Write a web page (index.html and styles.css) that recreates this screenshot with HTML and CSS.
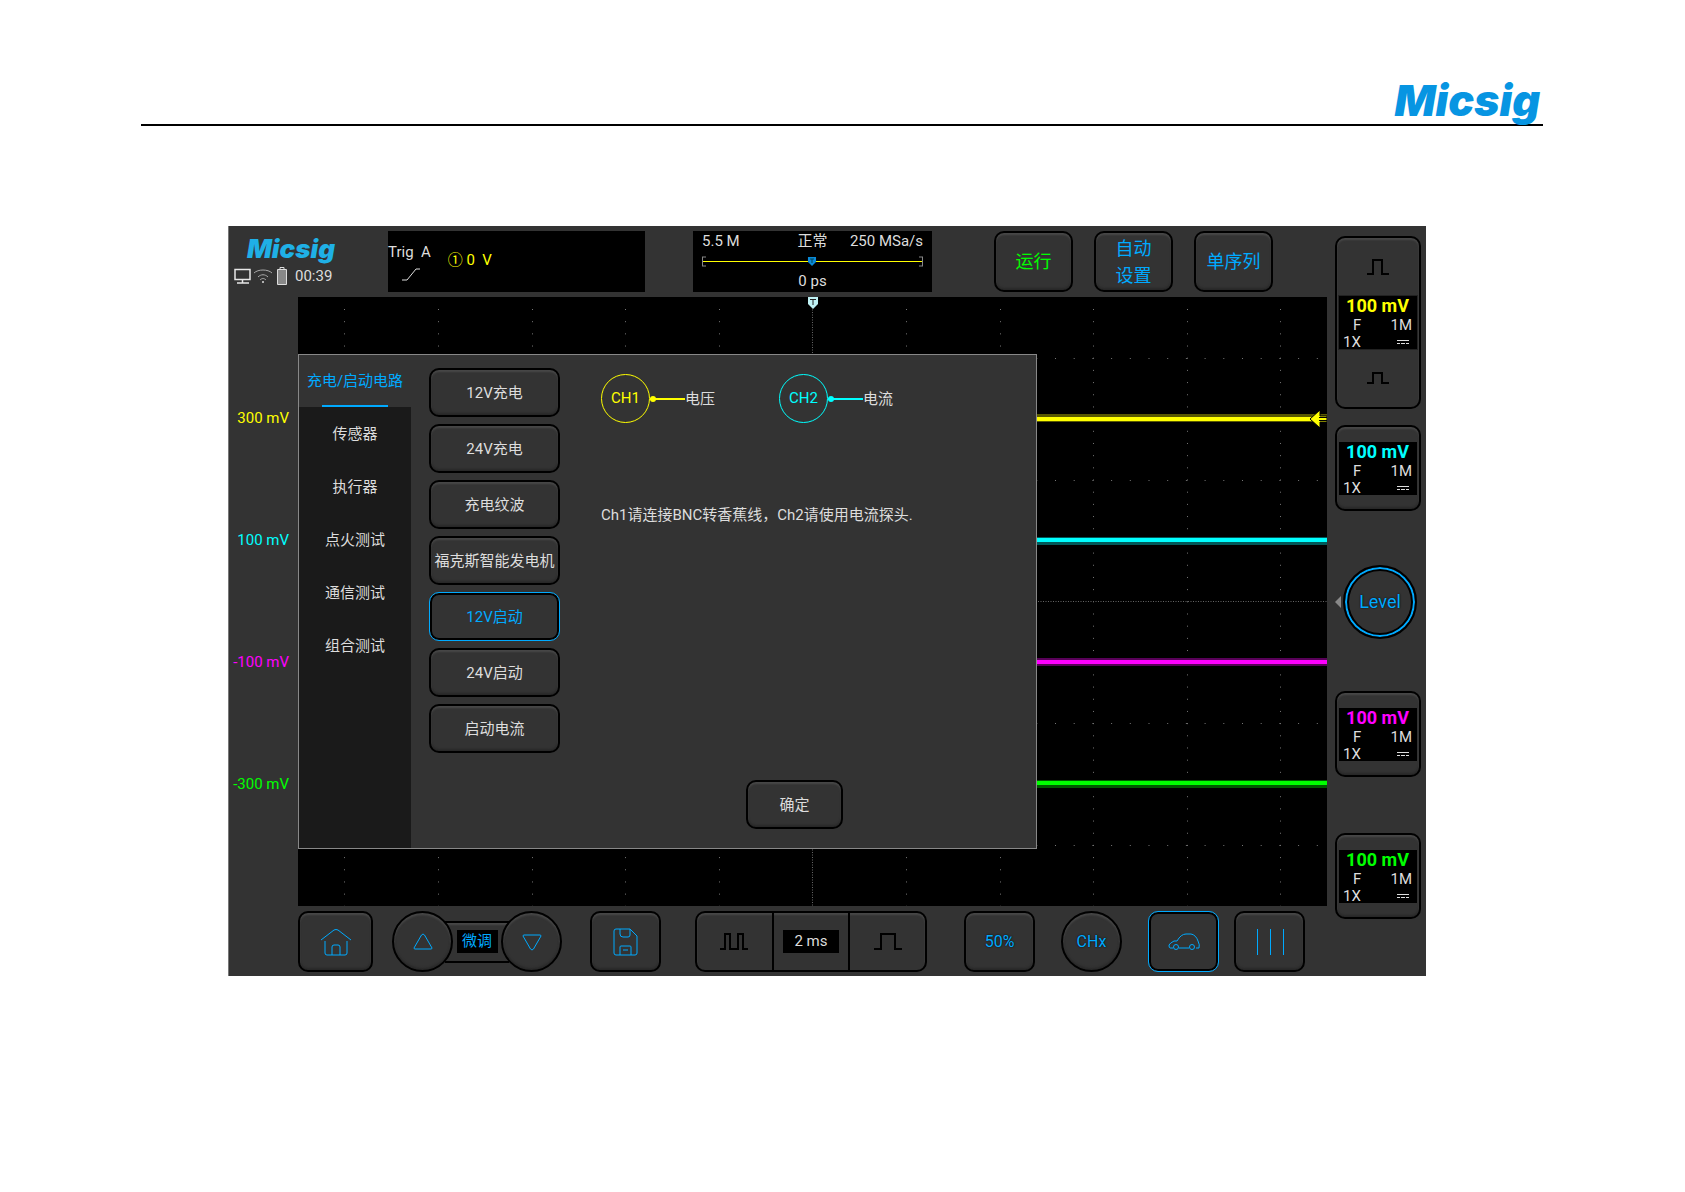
FILE: index.html
```html
<!DOCTYPE html>
<html lang="zh-CN">
<head>
<meta charset="utf-8">
<title>Micsig</title>
<link rel="stylesheet" href="styles.css">
</head>
<body>
<header class="pageHeader">
	<span class="brand">Micsig</span>
</header>
<main class="device">
	<!-- 顶部状态栏 -->
	<div class="topBar">
		<div class="status">
			<span class="logo">Micsig</span>
			<div class="statusIcons">
				<svg width="17" height="16" viewBox="0 0 17 16"><path d="M1 1.500h15v10H1zM8.500 12v3M3 15h12" fill="none" stroke="#e8e8e8" stroke-width="1.500"/></svg>
				<svg width="18" height="16" viewBox="0 0 18 16"><path d="M0 5C4 1 14 1 18 5M4 9c3-3 7-3 10 0M6 12c2-2 4-2 6 0" fill="none" stroke="#aaa"/><circle cx="9" cy="14" r="1" fill="#ddd"/></svg>
				<svg width="10" height="18" viewBox="0 0 10 18"><path d="M3 2V.500h4V2" fill="none" stroke="#ddd"/><path d="M.5 2.500h9v15h-9z" fill="#888" stroke="#ddd"/></svg>
				<span>00:39</span>
			</div>
		</div>
		<div class="trigBox">
			<div class="trigMode">
				<span>Trig&nbsp; A</span>
				<svg width="18" height="13" viewBox="0 0 18 13"><path d="M0 12h5L14 1h4" fill="none" stroke="#ddd"/></svg>
			</div>
			<span class="trigLevel">① 0&nbsp; V</span>
		</div>
		<div class="timeBox">
			<div class="timeInfo"><span>5.5 M</span><span>正常</span><span>250 MSa/s</span></div>
			<svg class="timeBar" width="219" height="11" viewBox="0 0 219 11" preserveAspectRatio="none">
				<path d="M1 5.500h217" stroke="#ff0"/>
				<path d="M4 1H.5v9H4M215 1h3.500v9H215" fill="none" stroke="#888"/>
				<path d="M105 1h8v5l-4 4-4-4z" fill="#0a8ad8"/><path d="M107 3h4M109 3v4" stroke="#045"/>
			</svg>
			<span>0 ps</span>
		</div>
		<div class="runButtons">
			<button class="key run">运行</button>
			<button class="key">自动<br>设置</button>
			<button class="key">单序列</button>
		</div>
	</div>

	<div class="axis">
		<span class="c1">300 mV</span>
		<span class="c2">100 mV</span>
		<span class="c3">-100 mV</span>
		<span class="c4">-300 mV</span>
	</div>

	<!-- 波形区 -->
	<div class="plot">
		<svg class="wave" viewBox="0 0 1029 609" preserveAspectRatio="none">
			<path d="M46.500 12V609M140.500 12V609M234.500 12V609M327.500 12V609M421.500 12V609M608.500 12V609M702.500 12V609M795.500 12V609M889.500 12V609M982.500 12V609" stroke="#777" stroke-dasharray="1 11.180"/>
			<path d="M9 61.500H1029M9 183.500H1029M9 426.500H1029M9 548.500H1029" stroke="#777" stroke-dasharray="1 17.700"/>
			<path d="M514.500 0V609M0 304.500H1029" stroke="#666" stroke-dasharray="1 1.500"/>
			<g fill="none" stroke-width="8" opacity=".35">
				<path d="M0 121H1029" stroke="#ff0"/><path d="M0 244H1029" stroke="#0ff"/><path d="M0 365H1029" stroke="#f0f"/><path d="M0 487H1029" stroke="#0f0"/>
			</g>
			<g fill="none" stroke-width="4">
				<path d="M0 122H1029" stroke="#ff0"/><path d="M0 243H1029" stroke="#0ff"/><path d="M0 365H1029" stroke="#f0f"/><path d="M0 486H1029" stroke="#0f0"/>
			</g>
			<path d="M1012 122l10-9v6h7v6h-7v6z" fill="#ff0" stroke="#000"/><path d="M1021 120.500h8M1021 123.500h8" stroke="#000"/>
			<path d="M510 0h10v7l-5 5-5-5z" fill="#bff2f5"/><path d="M512 2.500h6M515 3v5" stroke="#222"/>
		</svg>
		<div class="dialog">
			<nav class="tabs">
				<button class="tab active">充电/启动电路</button>
				<button class="tab">传感器</button>
				<button class="tab">执行器</button>
				<button class="tab">点火测试</button>
				<button class="tab">通信测试</button>
				<button class="tab">组合测试</button>
			</nav>
			<div class="options">
				<button class="key">12V充电</button>
				<button class="key">24V充电</button>
				<button class="key">充电纹波</button>
				<button class="key">福克斯智能发电机</button>
				<button class="key selected">12V启动</button>
				<button class="key">24V启动</button>
				<button class="key">启动电流</button>
			</div>
			<div class="detail">
				<div class="probes">
					<div class="probe c1"><i>CH1</i><b></b><span>电压</span></div>
					<div class="probe c2"><i>CH2</i><b></b><span>电流</span></div>
				</div>
				<p>Ch1请连接BNC转香蕉线，Ch2请使用电流探头.</p>
				<button class="key confirm">确定</button>
			</div>
		</div>
	</div>

	<!-- 通道 -->
	<aside class="channels">
		<div class="channelGroup">
			<button aria-label="CH1 +"><svg width="22" height="17" viewBox="0 0 22 17"><path d="M0 15h6V1h9v14h7" fill="none" stroke="#000" stroke-width="2"/></svg></button>
			<div class="screen c1"><strong>100 mV</strong><div><span>F</span><span>1M</span></div><div><span>1X</span><svg width="12" height="6" viewBox="0 0 12 6"><path d="M0 1.500h12M0 4.500h3M4 4.500h4M9 4.500h3" stroke="#ddd"/></svg></div></div>
			<button aria-label="CH1 -"><svg width="22" height="13" viewBox="0 0 22 13"><path d="M0 11h6V1h9v10h7" fill="none" stroke="#000" stroke-width="2"/></svg></button>
		</div>
		<button class="key channel ch2">
			<span class="screen c2"><strong>100 mV</strong><span><span>F</span><span>1M</span></span><span><span>1X</span><svg width="12" height="6" viewBox="0 0 12 6"><path d="M0 1.500h12M0 4.500h3M4 4.500h4M9 4.500h3" stroke="#ddd"/></svg></span></span>
		</button>
		<div class="levelRow">
			<svg width="6" height="12" viewBox="0 0 6 12"><path d="M6 0v12L0 6z" fill="#888"/></svg>
			<button class="level">Level</button>
		</div>
		<button class="key channel ch3">
			<span class="screen c3"><strong>100 mV</strong><span><span>F</span><span>1M</span></span><span><span>1X</span><svg width="12" height="6" viewBox="0 0 12 6"><path d="M0 1.500h12M0 4.500h3M4 4.500h4M9 4.500h3" stroke="#ddd"/></svg></span></span>
		</button>
		<button class="key channel ch4">
			<span class="screen c4"><strong>100 mV</strong><span><span>F</span><span>1M</span></span><span><span>1X</span><svg width="12" height="6" viewBox="0 0 12 6"><path d="M0 1.500h12M0 4.500h3M4 4.500h4M9 4.500h3" stroke="#ddd"/></svg></span></span>
		</button>
	</aside>

	<!-- 底部工具栏 -->
	<div class="toolBar">
		<button class="key home" aria-label="主页">
			<svg width="32" height="28" viewBox="0 0 32 28"><path d="M1 12L14 2q2-1 4 0l13 10M5 13v12q0 2 2 2h18q2 0 2-2V13M12 27v-8q0-2 2-2h4q2 0 2 2v8"/></svg>
		</button>
		<div class="fine">
			<button class="key round" aria-label="增加"><svg width="20" height="18" viewBox="0 0 20 18"><path d="M8.500 2q1.500-2 3 0L19 15q0 1-1 1H2q-1 0-1-1z"/></svg></button>
			<div class="fineLabel"><span>微调</span></div>
			<button class="key round" aria-label="减少"><svg width="20" height="18" viewBox="0 0 20 18"><path d="M8.500 16q1.500 2 3 0L19 3q0-1-1-1H2q-1 0-1 1z"/></svg></button>
		</div>
		<button class="key save" aria-label="保存">
			<svg width="26" height="28" viewBox="0 0 26 28"><path d="M3 1h14l7 7v17q0 2-2 2H3q-2 0-2-2V3q0-2 2-2zM7 1v5q0 3 3 3h5q2 0 2-2V1M7 27v-8q0-1 1-1h9q1 0 1 1v8M10 22h5"/></svg>
		</button>
		<div class="timeBase">
			<button aria-label="缩小时基"><svg width="28" height="18" viewBox="0 0 28 18"><path d="M0 16h5V1h5v15h8V1h5v15h5" /></svg></button>
			<div><span>2 ms</span></div>
			<button aria-label="放大时基"><svg width="28" height="18" viewBox="0 0 28 18"><path d="M0 16h7V1h14v15h7"/></svg></button>
		</div>
		<button class="key half">50%</button>
		<button class="key round chx">CHx</button>
		<button class="key car selected" aria-label="汽车">
			<svg width="32" height="18" viewBox="0 0 32 18"><path d="M5 15H2q-1 0-1-3 1-2 5-4h3q4-7 9-7h5q5 1 7 7 2 4 1 7h-3M11 15h10"/><circle cx="8" cy="14" r="2.500"/><circle cx="24" cy="14" r="2.500"/></svg>
		</button>
		<button class="key bars" aria-label="菜单">
			<svg width="28" height="26" viewBox="0 0 28 26"><path d="M1.500 0v26M14.500 0v26M27.500 0v26"/></svg>
		</button>
	</div>
</main>
</body>
</html>
```
FILE: styles.css
```css
*{
	box-sizing:border-box;
}
body{
	margin:0;
	padding:0 142px 0 141px;
	background:#fff;
	color:#ddd;
	font:15px/20px Roboto,"Noto Sans CJK SC",sans-serif;
}
button{
	margin:0;
	padding:0;
	border:0;
	background:none;
	color:inherit;
	font:inherit;
	cursor:pointer;
}
svg{
	display:block;
	flex:none;
}
.c1{ color:#ff0; }
.c2{ color:#0ff; }
.c3{ color:#f0f; }
.c4{ color:#0f0; }

.pageHeader{
	display:flex;
	justify-content:flex-end;
	padding:76px 3px 0 0;
	border-bottom:2px solid #000;
}
.brand{
	color:#0795e2;
	font-family:Inter,sans-serif;
	font-size:43px;
	line-height:48px;
	font-weight:900;
	font-style:italic;
}
.device{
	display:grid;
	grid-template-columns:69px 1fr 99px;
	grid-template-rows:71px auto 70px;
	margin:100px 117px 0 87px;
	background:#333;
	border-left:1px solid #777;
}

/* 通用按键 */
.key{
	border:2px solid #000;
	border-radius:10px;
	background:#333;
	box-shadow:inset 0 2px 2px #484848,inset 0 -2px 2px #292929;
}
.key.selected{
	border:1px solid #0af;
	box-shadow:inset 0 0 0 2px #000;
	color:#0af;
}

/* 顶部 */
.topBar{
	grid-column:1 / 3;
	display:flex;
	align-items:flex-start;
	padding-top:5px;
}
.status{
	width:159px;
	padding-top:6px;
}
.logo{
	display:block;
	padding-left:18px;
	color:#1fb0e6;
	font-family:Inter,sans-serif;
	font-size:26px;
	line-height:24px;
	font-weight:900;
	font-style:italic;
}
.statusIcons{
	display:flex;
	align-items:center;
	gap:5px;
	padding:5px 0 0 5px;
}
.statusIcons svg:first-child{
	margin-right:-2px;
}
.statusIcons span{
	padding-left:3px;
}
.trigBox,.timeBox{
	height:61px;
	background:#000;
}
.trigBox{
	display:flex;
	align-items:center;
	gap:17px;
	width:257px;
	margin-right:48px;
}
.trigMode svg{
	margin:6px 0 0 14px;
}
.trigLevel{
	padding-bottom:4px;
	color:#ff0;
}
.timeBox{
	display:flex;
	flex-direction:column;
	align-items:center;
	width:239px;
	padding:0 9px;
}
.timeInfo{
	display:grid;
	grid-template-columns:1fr auto 1fr;
	width:100%;
}
.timeInfo span:last-child{
	text-align:right;
}
.timeBar{
	width:100%;
	margin:5px 0 4px;
}
.runButtons{
	display:flex;
	gap:21px;
	margin-left:62px;
}
.runButtons .key{
	width:79px;
	height:61px;
	color:#0af;
	font-size:18px;
	line-height:27px;
}
.runButtons .run{
	color:#0f0;
}

/* 波形 */
.axis{
	display:flex;
	flex-direction:column;
	gap:102px;
	padding:111px 9px 0 0;
	text-align:right;
	white-space:nowrap;
}
.plot{
	position:relative;
	background:#000;
}
.wave{
	width:100%;
	height:609px;
}
.dialog{
	position:absolute;
	left:0;
	top:57px;
	display:flex;
	width:72%;
	max-width:739px;
	background:#333;
	border:1px solid #888;
}
.tabs{
	display:flex;
	flex-direction:column;
	gap:1px;
	width:112px;
	background:#1a1a1a;
}
.tab{
	position:relative;
	height:52px;
	white-space:nowrap;
}
.tab.active{
	background:#333;
	color:#0af;
}
.tab.active::after{
	content:"";
	position:absolute;
	left:23px;
	right:23px;
	bottom:0;
	height:2px;
	background:#0af;
}
.options{
	display:flex;
	flex-direction:column;
	gap:7px;
	width:131px;
	margin:13px 41px 0 18px;
}
.options .key{
	height:49px;
	white-space:nowrap;
}
.detail{
	flex:1;
	padding:19px 0 19px;
}
.probes{
	display:flex;
	gap:64px;
}
.probe{
	display:flex;
	align-items:center;
}
.probe i{
	width:49px;
	height:49px;
	border:1px solid;
	border-radius:50%;
	font-style:normal;
	line-height:47px;
	text-align:center;
}
.probe b{
	position:relative;
	width:35px;
	height:2px;
	background:currentColor;
}
.probe b::before{
	content:"";
	position:absolute;
	left:0;
	top:-2px;
	width:6px;
	height:6px;
	border-radius:50%;
	background:currentColor;
}
.probe span{
	color:#ddd;
}
.detail p{
	margin:82px 0 255px;
}
.confirm{
	display:block;
	width:97px;
	height:49px;
	margin-left:145px;
}

/* 右侧通道 */
.channels{
	grid-column:3;
	grid-row:1 / 4;
	display:flex;
	flex-direction:column;
	padding:10px 5px 0 8px;
}
.channelGroup{
	border:2px solid #000;
	border-radius:10px;
	box-shadow:inset 0 2px 2px #484848;
}
.channelGroup button{
	display:flex;
	align-items:center;
	justify-content:center;
	width:100%;
	height:58px;
}
.channelGroup .screen{
	margin:0 2px;
	outline:1px solid #222;
}
.screen{
	display:flex;
	flex-direction:column;
	height:53px;
	padding:0 5px 0 4px;
	background:#000;
}
.screen strong{
	font-size:18px;
	line-height:20px;
	text-align:center;
}
.screen>div,.screen>span{
	display:flex;
	align-items:center;
	justify-content:space-between;
	color:#ddd;
	line-height:14px;
}
.screen>:nth-child(2){
	padding-left:10px;
	line-height:19px;
}
.screen svg{
	margin-right:3px;
}
.channel{
	height:86px;
	padding:0 2px;
}
.ch2{ margin-top:16px; }
.ch3{ margin-top:52px; }
.ch4{ margin-top:56px; }
.levelRow{
	display:flex;
	align-items:center;
	justify-content:center;
	gap:2px;
	margin-top:54px;
	padding-right:4px;
}
.level{
	flex:none;
	width:74px;
	height:74px;
	border:2px solid #000;
	border-radius:50%;
	box-shadow:inset 0 0 0 2px #0af,inset 0 0 0 4px #000;
	color:#0af;
	font-size:18px;
	text-shadow:0 0 2px #000;
}

/* 底部 */
.toolBar{
	grid-column:1 / 3;
	display:flex;
	align-items:center;
	padding:1px 0 0 69px;
	color:#0af;
}
.toolBar .key{
	display:flex;
	align-items:center;
	justify-content:center;
	width:71px;
	height:61px;
}
.toolBar svg{
	fill:none;
	stroke:#0af;
}
.toolBar .home{
	width:75px;
}
.toolBar .round{
	width:61px;
	border-radius:50%;
}
.fine{
	display:flex;
	align-items:center;
	margin:0 28px 0 19px;
}
.fine .round{
	z-index:1;
}
.fineLabel{
	display:flex;
	align-items:center;
	justify-content:center;
	width:64px;
	height:42px;
	margin:0 -8px;
	border:solid #000;
	border-width:2px 0;
	box-shadow:inset 0 2px 2px #484848;
}
.fineLabel span,.timeBase span{
	flex:none;
	width:41px;
	background:#000;
	line-height:23px;
	text-align:center;
}
.timeBase{
	display:flex;
	width:232px;
	height:61px;
	margin:0 37px 0 34px;
	border:2px solid #000;
	border-radius:10px;
	box-shadow:inset 0 2px 2px #484848;
	color:#ddd;
}
.timeBase>*{
	display:flex;
	flex:1;
	align-items:center;
	justify-content:center;
}
.timeBase>div{
	border:solid #000;
	border-width:0 2px;
}
.timeBase span{
	width:56px;
}
.timeBase svg{
	stroke:#000;
	stroke-width:2;
}
.half,.chx{
	font-size:16px;
	text-shadow:0 0 2px #000;
}
.chx{
	margin:0 26px;
}
.bars{
	margin-left:15px;
}
```
